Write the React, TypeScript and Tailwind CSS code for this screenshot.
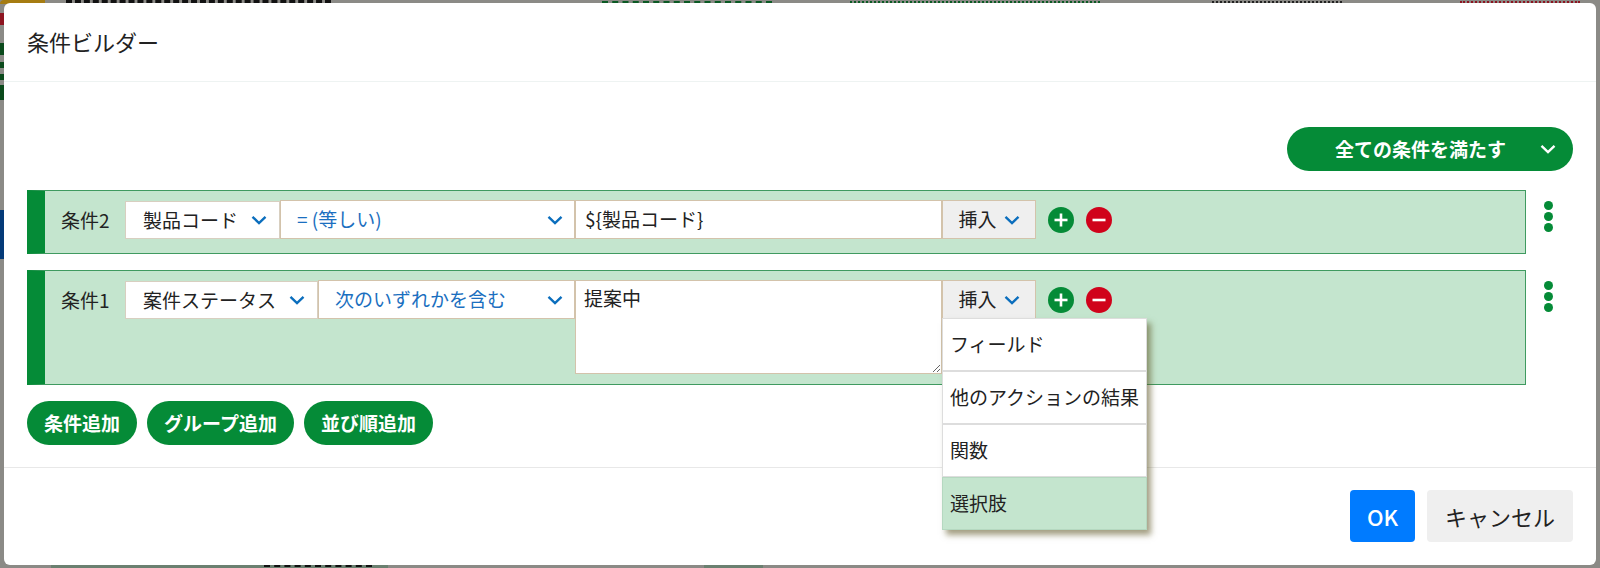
import type { ReactNode } from 'react'

function Chevron({ className = 'text-[#0b6ebd]' }: { className?: string }) {
  return (
    <svg className={`w-[16px] h-[10px] flex-shrink-0 ${className}`} viewBox="0 0 16 10" fill="none">
      <path d="M1.5 1.8 8 8l6.5-6.2" stroke="currentColor" strokeWidth={2.4} />
    </svg>
  )
}

function RoundIcon({ type }: { type: 'plus' | 'minus' }) {
  return (
    <div
      className={`w-[26px] h-[26px] rounded-full flex items-center justify-center ${
        type === 'plus' ? 'bg-[#058b37]' : 'bg-[#d0021b]'
      }`}
    >
      <svg className="w-[16px] h-[16px]" viewBox="0 0 16 16" fill="none">
        <path d="M1.5 8h13" stroke="white" strokeWidth={2.6} />
        {type === 'plus' && <path d="M8 1.5v13" stroke="white" strokeWidth={2.6} />}
      </svg>
    </div>
  )
}

function Dots() {
  return (
    <div className="flex flex-col gap-[2px] w-[9px] ml-[18px] mt-[11px]">
      <div className="w-[9px] h-[9px] rounded-full bg-[#058b37]" />
      <div className="w-[9px] h-[9px] rounded-full bg-[#058b37]" />
      <div className="w-[9px] h-[9px] rounded-full bg-[#058b37]" />
    </div>
  )
}

function InsertButton() {
  return (
    <div className="w-[94px] h-[39px] flex items-center justify-center gap-[7px] bg-[#efefef] border border-[#d3c3ab]">
      <span>挿入</span>
      <Chevron />
    </div>
  )
}

const menuItems = ['フィールド', '他のアクションの結果', '関数']

function InsertMenu() {
  return (
    <div className="absolute left-0 top-[38px] w-[205px] bg-white shadow-[4px_5px_6px_rgba(90,80,30,0.55)] z-10">
      {menuItems.map((item) => (
        <div key={item} className="h-[53px] flex items-center pl-[7px] border border-[#dddddd] whitespace-nowrap">
          {item}
        </div>
      ))}
      <div className="h-[53px] flex items-center pl-[7px] bg-[#c4e5ce] border border-[#b5d8c0]">選択肢</div>
    </div>
  )
}

interface RowProps {
  label: string
  field: string
  fieldWidth: string
  operator: string
  operatorWidth: string
  height: string
  value: ReactNode
  menu?: boolean
}

function ConditionRow({ label, field, fieldWidth, operator, operatorWidth, height, value, menu }: RowProps) {
  return (
    <div className="flex items-start">
      <div className={`w-[1499px] ${height} flex items-start bg-[#c4e5ce] border border-[#3f9a60] border-l-[18px] border-l-[#058b37] pl-[16px] pt-[9px]`}>
        <span className="w-[64px] mt-[6px] text-[#222222]">{label}</span>
        <div className={`${fieldWidth} h-[38px] mt-[1px] flex items-center justify-between pl-[17px] pr-[12px] bg-white border border-[#d8cfc0]`}>
          <span className="whitespace-nowrap">{field}</span>
          <Chevron />
        </div>
        <div className={`${operatorWidth} h-[39px] flex items-center justify-between pl-[16px] pr-[11px] bg-white border border-[#d3c3ab] text-[#1b6fc0]`}>
          <span className="whitespace-nowrap">{operator}</span>
          <Chevron />
        </div>
        {value}
        <div className="relative">
          <InsertButton />
          {menu && <InsertMenu />}
        </div>
        <div className="flex gap-[12px] ml-[12px] mt-[7px]">
          <RoundIcon type="plus" />
          <RoundIcon type="minus" />
        </div>
      </div>
      <Dots />
    </div>
  )
}

const addButtons = ['条件追加', 'グループ追加', '並び順追加']

export default function App() {
  return (
    <div className="relative w-[1600px] h-[568px] overflow-hidden bg-[#8b8a86] text-[19px] text-[#222222] font-['Noto_Sans_CJK_JP','Noto_Sans',sans-serif]">
      {/* page behind the overlay, only its edges show */}
      <div className="absolute left-0 top-0 w-[45px] h-[4px] rounded-tl-md bg-[#a67c12]" />
      <div className="absolute left-0 top-[13px] w-[4px] h-[12px] bg-[#8d1420]" />
      <div className="absolute left-0 top-[43px] w-[4px] h-[12px] bg-[#0b4a1c]" />
      <div className="absolute left-0 top-[62px] w-[4px] h-[6px] bg-[#0b4a1c]" />
      <div className="absolute left-0 top-[74px] w-[4px] h-[6px] bg-[#0b4a1c]" />
      <div className="absolute left-0 top-[85px] w-[4px] h-[15px] bg-[#0b4a1c]" />
      <div className="absolute left-0 top-[210px] w-[4px] h-[49px] bg-[#053a78]" />
      <div className="absolute left-[66px] top-0 w-[265px] h-[3px] border-b-[3px] border-dashed border-[#111111]" />
      <div className="absolute left-[602px] top-0 w-[170px] h-[3px] border-b-[2px] border-dashed border-[#0b5a24]" />
      <div className="absolute left-[850px] top-0 w-[250px] h-[3px] border-b-[2px] border-dotted border-[#0b5a24]" />
      <div className="absolute left-[1212px] top-0 w-[130px] h-[3px] border-b-[2px] border-dotted border-[#222222]" />
      <div className="absolute left-[1460px] top-0 w-[120px] h-[3px] border-b-[2px] border-dotted border-[#8d1420]" />
      <div className="absolute left-[51px] top-[565px] w-[337px] h-[3px] bg-[#6b8070]" />
      <div className="absolute left-[704px] top-[565px] w-[59px] h-[3px] bg-[#6b8070]" />
      <div className="absolute left-[264px] top-[565px] w-[108px] h-[2px] border-b-[2px] border-dashed border-[#111111]" />

      <div className="relative ml-[4px] mt-[3px] w-[1592px] h-[562px] flex flex-col bg-white rounded-[6px]">
        <div className="h-[79px] flex-shrink-0 flex items-center pl-[23px] pb-[1px] border-b border-[#eef3f2] text-[22px] text-[#222222]">
          条件ビルダー
        </div>
        <div className="h-[386px] flex-shrink-0 flex flex-col pl-[23px] pt-[45px] border-b border-[#e8e8e8]">
          <div className="flex justify-end pr-[23px] mb-[19px]">
            <div className="w-[286px] h-[44px] flex items-center justify-between pl-[48px] pr-[17px] rounded-full bg-[#058b37] text-white font-bold">
              <span>全ての条件を満たす</span>
              <Chevron className="text-white" />
            </div>
          </div>
          <div className="flex flex-col gap-[16px]">
            <ConditionRow
              label="条件2"
              field="製品コード"
              fieldWidth="w-[155px]"
              operator="= (等しい)"
              operatorWidth="w-[295px]"
              height="h-[64px]"
              value={
                <div className="w-[367px] h-[39px] flex items-center pl-[9px] bg-white border border-[#d3c3ab]">
                  {'${製品コード}'}
                </div>
              }
            />
            <ConditionRow
              label="条件1"
              field="案件ステータス"
              fieldWidth="w-[193px]"
              operator="次のいずれかを含む"
              operatorWidth="w-[257px]"
              height="h-[115px]"
              menu
              value={
                <textarea
                  defaultValue="提案中"
                  className="w-[367px] h-[94px] block pl-[8px] pt-[3px] bg-white border border-[#d3c3ab] outline-none resize-y"
                />
              }
            />
          </div>
          <div className="flex gap-[10px] mt-[16px]">
            {addButtons.map((name) => (
              <div key={name} className="h-[44px] flex items-center px-[17px] rounded-full bg-[#058b37] text-white font-bold">
                {name}
              </div>
            ))}
          </div>
        </div>
        <div className="flex justify-end gap-[12px] pt-[22px] pr-[23px]">
          <div className="w-[65px] h-[52px] flex items-center justify-center rounded-[4px] bg-[#007bff] text-white text-[22px] font-medium">
            OK
          </div>
          <div className="w-[146px] h-[52px] flex items-center justify-center rounded-[4px] bg-[#efefef] text-[#222222] text-[22px]">
            キャンセル
          </div>
        </div>
      </div>
    </div>
  )
}
